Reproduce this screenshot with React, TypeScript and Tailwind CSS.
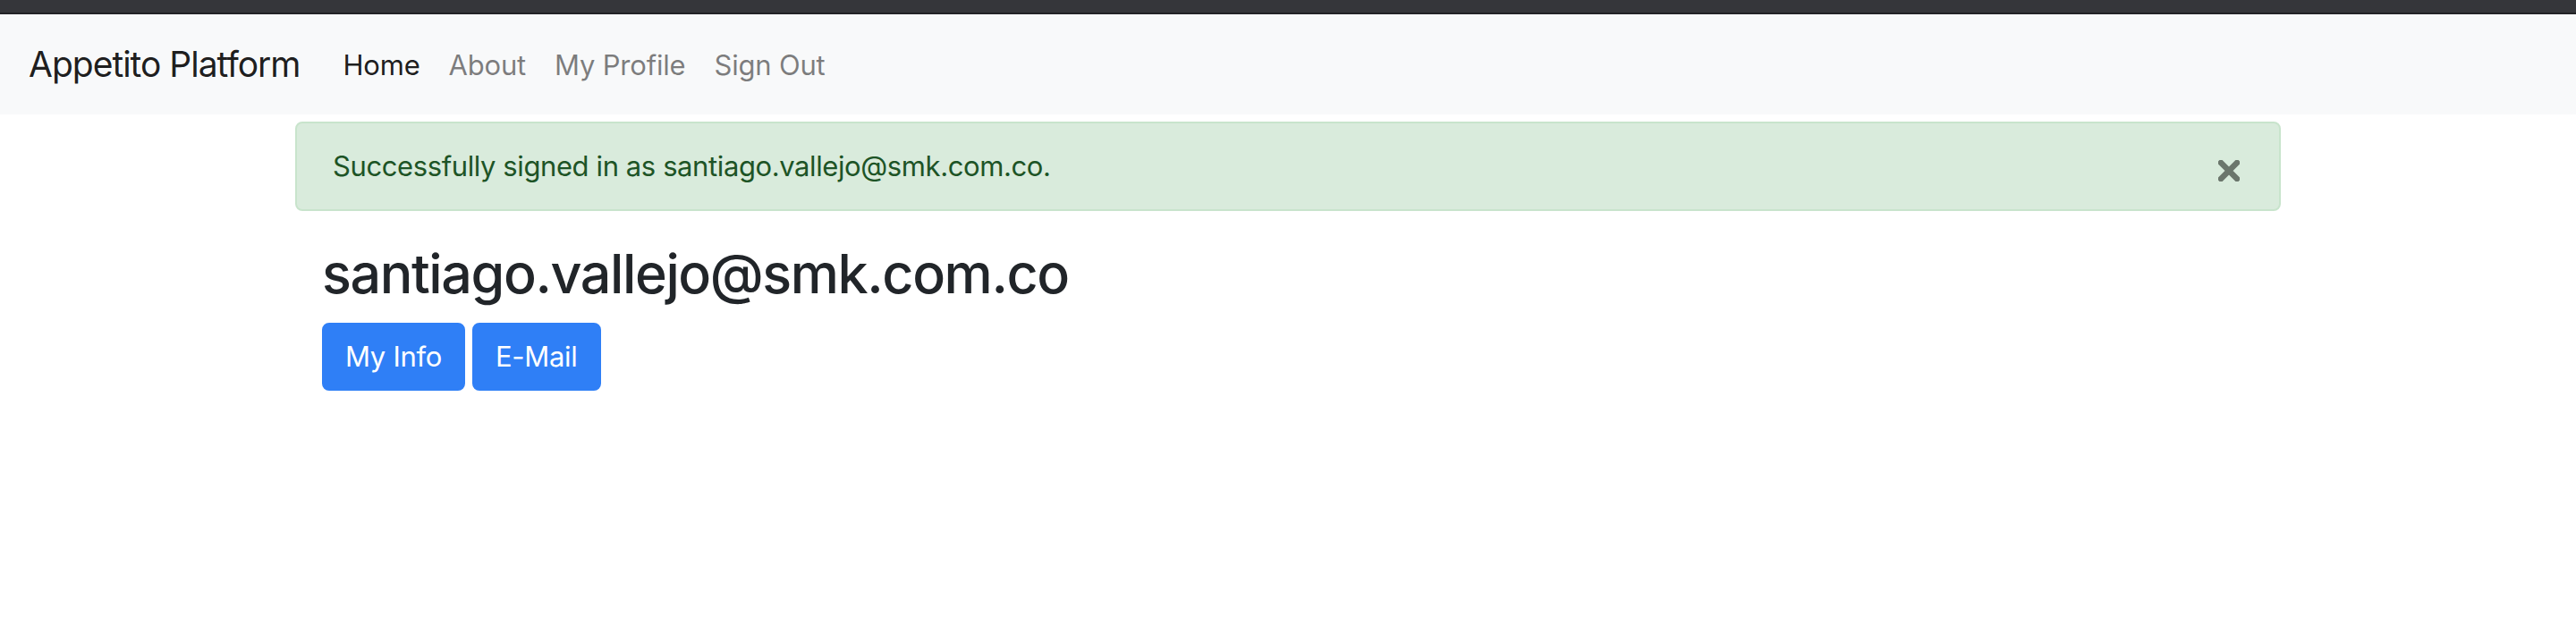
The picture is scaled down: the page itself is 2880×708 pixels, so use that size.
import React from 'react';

const NavBar: React.FC = () => {
  const links = [
    { label: 'Home', active: true },
    { label: 'About', active: false },
    { label: 'My Profile', active: false },
    { label: 'Sign Out', active: false },
  ];
  return (
    <nav className="h-[112px] bg-[#f8f9fa] flex items-center px-[32px]">
      <a className="text-[39px] leading-[60px] text-black/90 mr-[32px] tracking-[-1px]">Appetito Platform</a>
      <ul className="flex">
        {links.map((l) => (
          <li key={l.label}>
            <a
              className={
                l.active
                  ? 'block px-[16px] text-[31px] leading-[48px] text-black/90 mt-[2px] tracking-[-0.2px]'
                  : 'block px-[16px] text-[31px] leading-[48px] text-black/50 mt-[2px] tracking-[-0.2px]'
              }
            >
              {l.label}
            </a>
          </li>
        ))}
      </ul>
    </nav>
  );
};

export default function App() {
  return (
    <div className="min-h-screen bg-white font-['Inter','Liberation_Sans',sans-serif]">
      {/* window chrome strip */}
      <div className="h-[14px] bg-[#35363a]" />
      <div className="h-[2px] bg-[#232326]" />

      <NavBar />

      <div className="w-[2280px] mx-auto px-[30px] pt-[8px]">
        {/* Alert */}
        <div className="flex items-center justify-between bg-[#d9ebdc] border-2 border-[#c8e4cc] rounded-[8px] pl-[40px] pr-[44px] py-[24px] mb-[32px]">
          <span className="text-[31px] leading-[48px] text-[#1d5426] tracking-[-0.4px]">
            Successfully signed in as santiago.vallejo@smk.com.co.
          </span>
          <button className="mt-[9px]" aria-label="Close">
            <svg width="24" height="24" viewBox="0 0 24 24" className="block">
              <path d="M3 3 L21 21 M21 3 L3 21" stroke="#6b766c" strokeWidth="6.5" strokeLinecap="square" />
            </svg>
          </button>
        </div>

        <div className="px-[30px]">
          <h2 className="text-[61px] leading-[77px] font-medium text-[#212529] mb-[16px] tracking-[-1.4px]">
            santiago.vallejo@smk.com.co
          </h2>
          <div className="flex gap-[8px]">
            <button className="bg-[#2f7ff6] border-2 border-[#2f7ff6] text-white text-[31px] leading-[48px] px-[24px] py-[12px] rounded-[8px] tracking-[-0.3px]">
              My Info
            </button>
            <button className="bg-[#2f7ff6] border-2 border-[#2f7ff6] text-white text-[31px] leading-[48px] px-[24px] py-[12px] rounded-[8px] tracking-[-0.3px]">
              E-Mail
            </button>
          </div>
        </div>
      </div>
    </div>
  );
}
